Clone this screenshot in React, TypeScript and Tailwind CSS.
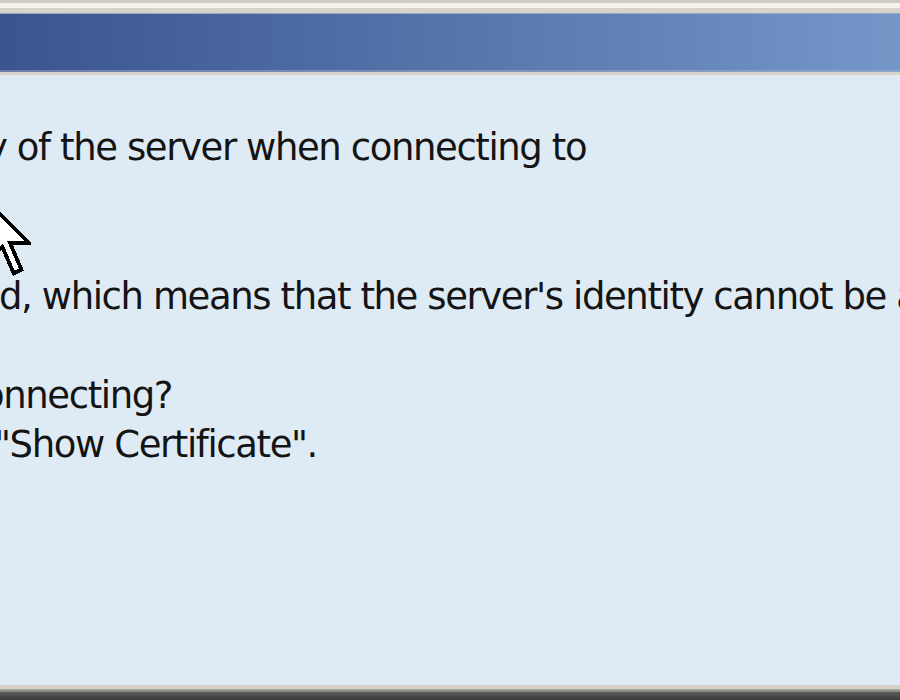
export default function App() {
  const lines: { text: string; shift: string }[] = [
    { text: 'y of the server when connecting to', shift: 'ml-[-14px]' },
    { text: '', shift: '' },
    { text: '', shift: '' },
    { text: "d, which means that the server's identity cannot be authenticated.", shift: 'ml-[-1px]' },
    { text: '', shift: '' },
    { text: 'onnecting?', shift: 'ml-[-18px]' },
    { text: '"Show Certificate".', shift: 'ml-[-6px]' },
  ]

  return (
    <div className="relative flex h-[700px] w-[900px] flex-col overflow-hidden bg-[#dfebf4]">
      {/* window frame top */}
      <div className="h-[3px] bg-[#cfcbc3]" />
      <div className="h-[5px] bg-[#f4f2ed]" />
      <div className="h-[5px] bg-[#d7d3ca]" />
      <div className="h-px bg-[#9aa6bd]" />

      {/* title bar */}
      <div className="h-[56px] bg-gradient-to-r from-[#3a548f] via-[#5675ab] to-[#7597c8]" />
      <div className="h-[2px] bg-gradient-to-r from-[#6d7fa6] to-[#8ea5cb]" />
      <div className="h-[3px] bg-[#d8d4ca]" />
      <div className="h-px bg-[#e6eaec]" />

      {/* body */}
      <div className="flex-1 overflow-hidden pt-[47px] font-['DejaVu_Sans',sans-serif] text-[37px] leading-[49.5px] tracking-[-1.4px] text-[#141414]">
        {lines.map((line, index) => (
          <div className={`h-[49.5px] whitespace-pre ${line.shift}`} key={index}>
            {line.text}
          </div>
        ))}
      </div>

      {/* window frame bottom */}
      <div className="h-[4px] bg-[#d6d2c8]" />
      <div className="h-[3px] bg-gradient-to-b from-[#b0ada6] to-[#7c7b78]" />
      <div className="h-[8px] bg-gradient-to-b from-[#5c5c5c] to-[#3a3a3a]" />

      {/* mouse pointer */}
      <svg
        className="absolute left-[-15px] top-[199px]"
        width="46"
        height="80"
        viewBox="0 0 12 21"
        shapeRendering="crispEdges"
      >
        <path
          d="M0.5 0.5 L0.5 16.5 L4.5 12.5 L7.5 19.5 L9.5 18.5 L6.5 11.5 L11.5 11.5 Z"
          fill="#ffffff"
          stroke="#000000"
          strokeWidth="1"
          strokeLinejoin="miter"
        />
      </svg>
    </div>
  )
}
